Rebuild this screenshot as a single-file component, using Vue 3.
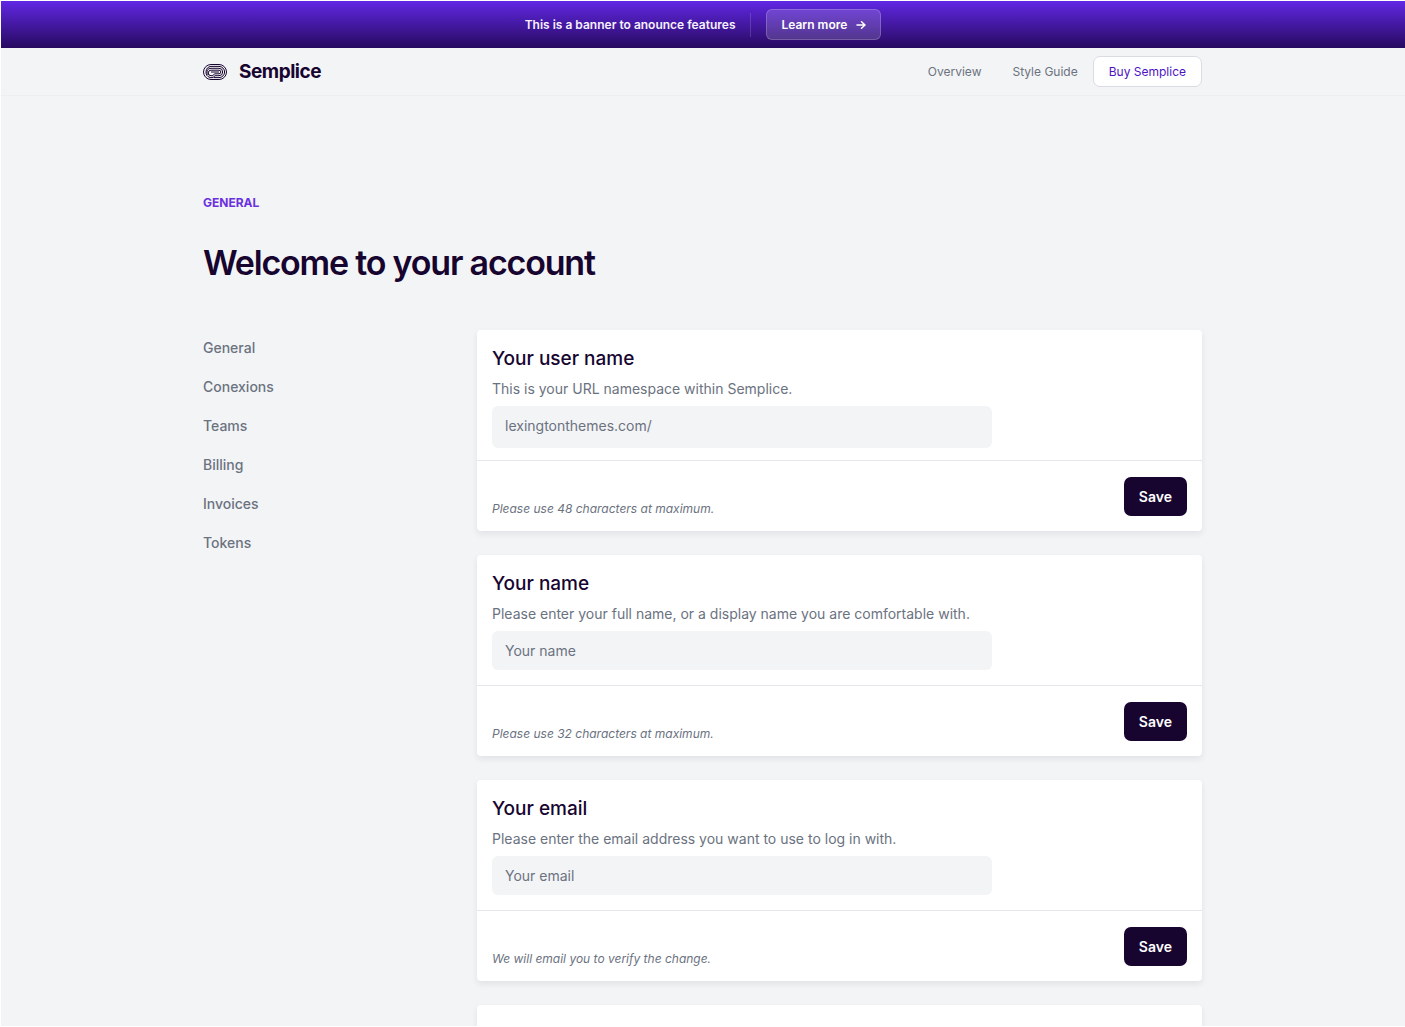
<script setup>
const menu = ['General', 'Conexions', 'Teams', 'Billing', 'Invoices', 'Tokens']

const cards = [
  {
    id: 'username',
    title: 'Your user name',
    text: 'This is your URL namespace within Semplice.',
    placeholder: 'lexingtonthemes.com/',
    note: 'Please use 48 characters at maximum.',
    type: 'text',
    tall: true,
  },
  {
    id: 'name',
    title: 'Your name',
    text: 'Please enter your full name, or a display name you are comfortable with.',
    placeholder: 'Your name',
    note: 'Please use 32 characters at maximum.',
    type: 'text',
  },
  {
    id: 'email',
    title: 'Your email',
    text: 'Please enter the email address you want to use to log in with.',
    placeholder: 'Your email',
    note: 'We will email you to verify the change.',
    type: 'email',
  },
]
</script>

<template>
  <div class="page">
    <aside class="banner">
      <p class="banner-text">This is a banner to anounce features</p>
      <span class="banner-rule"></span>
      <a class="banner-link" href="#">
        Learn more
        <svg width="10" height="10" viewBox="0 0 10 10" fill="none" stroke="currentColor" stroke-width="1.5" stroke-linecap="round" stroke-linejoin="round" aria-hidden="true">
          <path d="M1 5h8M5.500 1.700 9 5 5.500 8.300" />
        </svg>
      </a>
    </aside>

    <header class="header">
      <div class="wrap header-row">
        <a class="brand" href="#">
          <svg width="24" height="16" viewBox="0 0 24 16" fill="none" stroke="currentColor" stroke-width="1" aria-hidden="true">
            <rect x="0.500" y="0.500" width="23" height="15" rx="7.500" />
            <path d="M7 13.500A5.700 5.700 0 0 1 8 2.400h8a5.600 5.600 0 0 1 0 11.200h-5" />
            <path d="M5.500 11.200A3.800 3.800 0 0 1 8 4.300h8a3.700 3.700 0 0 1 0 7.400h-4l-2 1.900H7" />
            <path d="M10 11.700H8A2 2 0 0 1 8 6.200h8a1.800 1.800 0 0 1 0 3.600h-4.500l-1.500 1.900" />
            <path d="M8 8h8" />
          </svg>
          <span>Semplice</span>
        </a>
        <nav class="nav">
          <a class="nav-link" href="#">Overview</a>
          <a class="nav-link" href="#">Style Guide</a>
          <a class="buy" href="#">Buy Semplice</a>
        </nav>
      </div>
    </header>

    <main class="wrap main">
      <p class="eyebrow">General</p>
      <h1>Welcome to your account</h1>
      <div class="columns">
        <nav class="side">
          <a v-for="item in menu" :key="item" href="#">{{ item }}</a>
        </nav>
        <div class="cards">
          <form v-for="card in cards" :key="card.id" class="card" @submit.prevent>
            <div class="card-body">
              <h2>{{ card.title }}</h2>
              <label :for="card.id">{{ card.text }}</label>
              <div class="field" :class="{ tall: card.tall }">
                <input :id="card.id" :type="card.type" :placeholder="card.placeholder" />
              </div>
            </div>
            <div class="card-foot">
              <p>{{ card.note }}</p>
              <button type="submit">Save</button>
            </div>
          </form>
          <div class="card card-next"></div>
        </div>
      </div>
    </main>
  </div>
</template>

<style>
body {
  background: #f3f4f6;
  overflow: hidden;
}
</style>

<style scoped>
* {
  box-sizing: border-box;
  margin: 0;
}

.page {
  height: 100vh;
  overflow: hidden;
  border: 1px solid #fff;
  border-right: 0;
  background: #f3f4f6;
  color: #6b7280;
  font-family: Inter, sans-serif;
  font-size: 14px;
  line-height: 20px;
}

a {
  color: inherit;
  text-decoration: none;
}

.wrap {
  width: 100%;
  max-width: 1030px;
  margin: 0 auto;
  padding: 0 16px 0 15px;
}

.banner {
  display: flex;
  align-items: center;
  justify-content: center;
  gap: 15px;
  height: 47px;
  background: linear-gradient(#6127e4, #270a60);
  color: #fff;
  font-size: 12px;
  font-weight: 600;
}

.banner-text {
  color: #f6f0ff;
}

.banner-rule {
  width: 1px;
  height: 24px;
  background: rgba(255, 255, 255, 0.15);
}

.banner-link {
  display: flex;
  align-items: center;
  gap: 9px;
  height: 31px;
  padding: 0 14px;
  border: 1px solid rgba(255, 255, 255, 0.2);
  border-radius: 6px;
  background: rgba(255, 255, 255, 0.16);
}

.header {
  border-bottom: 1px solid #eceef1;
}

.header-row {
  display: flex;
  align-items: center;
  justify-content: space-between;
  height: 47px;
}

.brand {
  display: flex;
  align-items: center;
  gap: 12px;
  color: #170530;
  font-size: 19px;
  font-weight: 700;
  letter-spacing: -0.025em;
}

.nav {
  display: flex;
  align-items: center;
  gap: 31px;
  font-size: 12px;
}

.buy {
  height: 31px;
  margin-left: -16px;
  padding: 0 15px;
  border: 1px solid #d9dce2;
  border-radius: 7px;
  background: #fff;
  color: #4d12c4;
  line-height: 29px;
}

.main {
  padding-top: 97px;
}

.eyebrow {
  color: #6a30e0;
  font-size: 12px;
  font-weight: 700;
  text-transform: uppercase;
}

h1 {
  margin-top: 30px;
  color: #170530;
  font-size: 34px;
  font-weight: 600;
  line-height: 40px;
  letter-spacing: -0.035em;
}

.columns {
  display: grid;
  grid-template-columns: 250px 1fr;
  gap: 24px;
  margin-top: 47px;
}

.side {
  display: flex;
  flex-direction: column;
  gap: 19px;
  padding-top: 8px;
  font-weight: 500;
}

.cards {
  display: flex;
  flex-direction: column;
  gap: 24px;
}

.card {
  border-radius: 4px;
  background: #fff;
  box-shadow: 0 3px 6px rgba(17, 24, 39, 0.08);
}

.card-next {
  height: 201px;
}

.card-body {
  padding: 15px 16px 12px 15px;
}

h2 {
  color: #170530;
  font-size: 19px;
  font-weight: 500;
  line-height: 28px;
}

label {
  display: block;
  margin-top: 6px;
}

.field {
  max-width: 500px;
  height: 42px;
  margin-top: 7px;
}

input {
  display: block;
  width: 100%;
  height: 39px;
  padding: 0 13px;
  border: 0;
  border-radius: 6px;
  background: #f3f4f6;
  color: #170530;
  font: inherit;
}

.tall input {
  height: 42px;
  padding-bottom: 3px;
}

input::placeholder {
  color: #6b7280;
  opacity: 1;
}

.card-foot {
  display: flex;
  align-items: flex-end;
  justify-content: space-between;
  padding: 16px 15px 15px;
  border-top: 1px solid #e5e7eb;
}

.card-foot p {
  font-size: 12px;
  font-style: italic;
  line-height: 14px;
}

button {
  height: 39px;
  padding: 0 15px;
  border: 0;
  border-radius: 7px;
  background: #170530;
  color: #fff;
  font: inherit;
  font-weight: 600;
}
</style>
